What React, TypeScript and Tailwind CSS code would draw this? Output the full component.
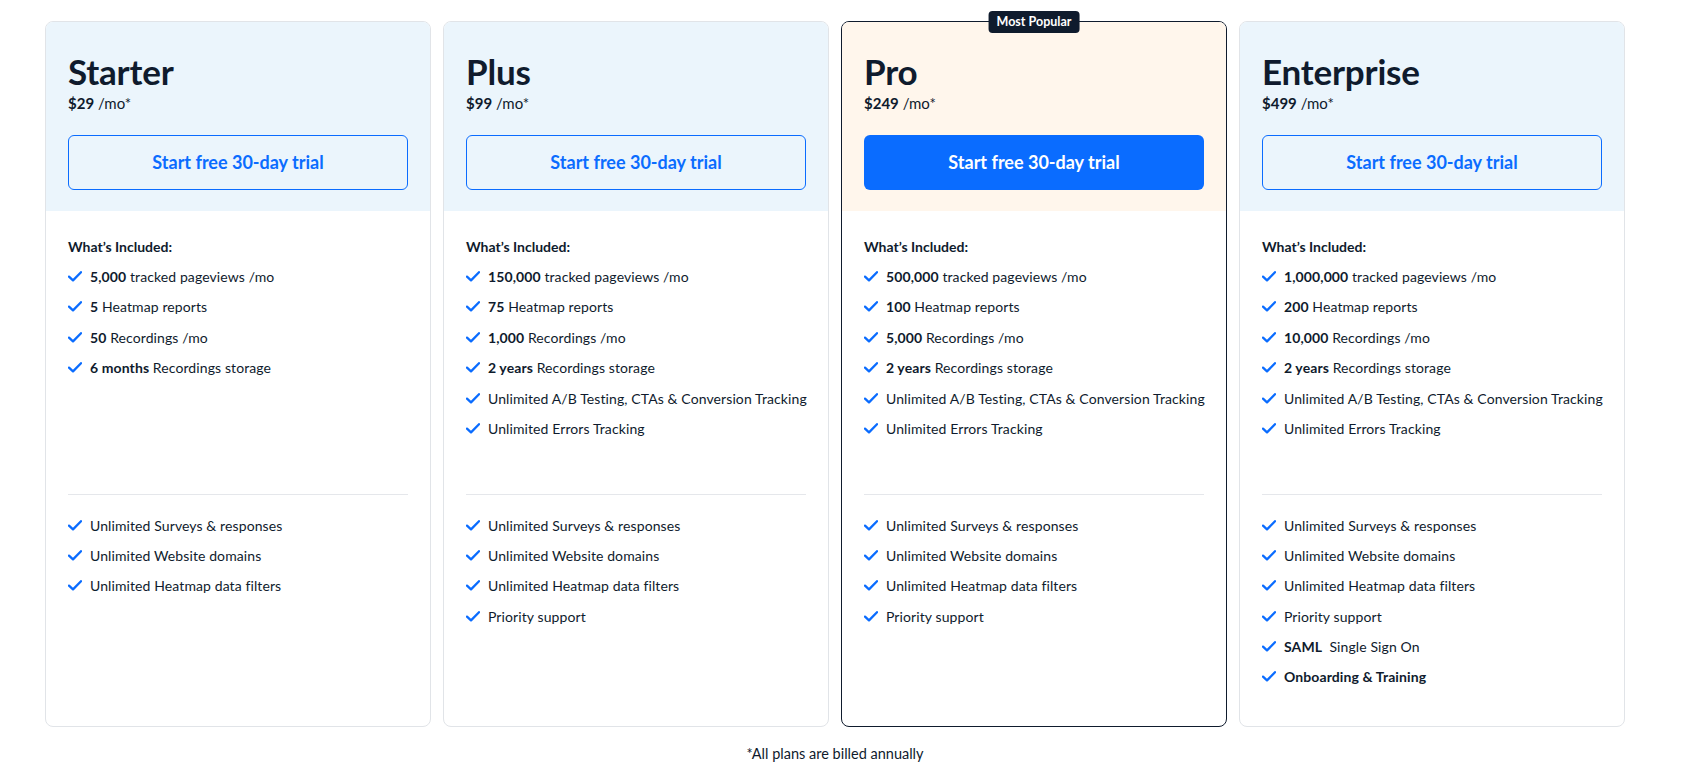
import React from "react";

type Feature = { bold?: string; text?: string; allBold?: string };

type Plan = {
  name: string;
  price: string;
  popular?: boolean;
  main: Feature[];
  extra: Feature[];
};

const common: Feature[] = [
  { text: "Unlimited Surveys & responses" },
  { text: "Unlimited Website domains" },
  { text: "Unlimited Heatmap data filters" },
];

const plans: Plan[] = [
  {
    name: "Starter",
    price: "$29",
    main: [
      { bold: "5,000", text: "tracked pageviews /mo" },
      { bold: "5", text: "Heatmap reports" },
      { bold: "50", text: "Recordings /mo" },
      { bold: "6 months", text: "Recordings storage" },
    ],
    extra: common,
  },
  {
    name: "Plus",
    price: "$99",
    main: [
      { bold: "150,000", text: "tracked pageviews /mo" },
      { bold: "75", text: "Heatmap reports" },
      { bold: "1,000", text: "Recordings /mo" },
      { bold: "2 years", text: "Recordings storage" },
      { text: "Unlimited A/B Testing, CTAs & Conversion Tracking" },
      { text: "Unlimited Errors Tracking" },
    ],
    extra: [...common, { text: "Priority support" }],
  },
  {
    name: "Pro",
    price: "$249",
    popular: true,
    main: [
      { bold: "500,000", text: "tracked pageviews /mo" },
      { bold: "100", text: "Heatmap reports" },
      { bold: "5,000", text: "Recordings /mo" },
      { bold: "2 years", text: "Recordings storage" },
      { text: "Unlimited A/B Testing, CTAs & Conversion Tracking" },
      { text: "Unlimited Errors Tracking" },
    ],
    extra: [...common, { text: "Priority support" }],
  },
  {
    name: "Enterprise",
    price: "$499",
    main: [
      { bold: "1,000,000", text: "tracked pageviews /mo" },
      { bold: "200", text: "Heatmap reports" },
      { bold: "10,000", text: "Recordings /mo" },
      { bold: "2 years", text: "Recordings storage" },
      { text: "Unlimited A/B Testing, CTAs & Conversion Tracking" },
      { text: "Unlimited Errors Tracking" },
    ],
    extra: [
      ...common,
      { text: "Priority support" },
      { bold: "SAML", text: "\u00a0Single Sign On" },
      { allBold: "Onboarding & Training" },
    ],
  },
];

function Check() {
  return (
    <svg width="14" height="11" viewBox="0 0 14 11" className="shrink-0">
      <path
        d="M1 5.6 L5 9.4 L13 1.2"
        fill="none"
        stroke="#0a6cff"
        strokeWidth="2.3"
        strokeLinecap="round"
        strokeLinejoin="round"
      />
    </svg>
  );
}

function FeatureRow({ f }: { f: Feature }) {
  return (
    <li className="flex items-center gap-[8px] h-[20px] text-[14px] tracking-[0.1px] whitespace-nowrap text-[#0f1b2d]">
      <Check />
      <span>
        {f.allBold && <b className="font-bold">{f.allBold}</b>}
        {f.bold && <b className="font-bold">{f.bold}</b>}
        {f.bold && " "}
        {f.text}
      </span>
    </li>
  );
}

function PlanCard({ plan }: { plan: Plan }) {
  return (
    <div
      className={`relative w-[386px] h-[706px] rounded-[8px] border ${
        plan.popular ? "border-[#0f1b2d]" : "border-[#e1e4e8]"
      } flex flex-col`}
    >
      {plan.popular && (
        <div className="absolute left-1/2 -translate-x-1/2 -top-[11px] h-[22px] px-[8px] rounded-[4px] bg-[#0f1b2d] text-white text-[12.5px] font-bold flex items-center">
          Most Popular
        </div>
      )}
      <div
        className={`h-[189px] rounded-t-[7px] px-[22px] pt-[28px] ${
          plan.popular ? "bg-[#fff6ec]" : "bg-[#ebf5fc]"
        }`}
      >
        <h2 className="text-[35px] leading-[42px] font-bold text-[#0f1b2d] tracking-[-0.2px]">
          {plan.name}
        </h2>
        <p className="mt-[1px] text-[15px] leading-[20px] text-[#0f1b2d]">
          <b className="font-bold">{plan.price}</b> /mo*
        </p>
        <button
          className={`mt-[22px] w-full h-[55px] rounded-[6px] text-[18px] font-bold ${
            plan.popular
              ? "bg-[#0a6cff] text-white"
              : "border border-[#0a6cff] text-[#0a6cff]"
          }`}
        >
          Start free 30-day trial
        </button>
      </div>
      <div className="px-[22px]">
        <div className="h-[283px] pt-[26px]">
          <p className="text-[14px] leading-[20px] font-bold text-[#0f1b2d]">
            What’s Included:
          </p>
          <ul className="mt-[9px] flex flex-col gap-[10.5px]">
            {plan.main.map((f, i) => (
              <FeatureRow key={i} f={f} />
            ))}
          </ul>
        </div>
        <div className="h-px bg-[#e5e7eb]" />
        <ul className="pt-[20px] flex flex-col gap-[10.4px]">
          {plan.extra.map((f, i) => (
            <FeatureRow key={i} f={f} />
          ))}
        </ul>
      </div>
    </div>
  );
}

export default function App() {
  return (
    <div
      className="bg-white min-h-[781px] pt-[21px] pl-[45px]"
      style={{ fontFamily: "Lato, 'Open Sans', sans-serif" }}
    >
      <div className="flex gap-[12px]">
        {plans.map((p) => (
          <PlanCard key={p.name} plan={p} />
        ))}
      </div>
      <p className="w-[1580px] text-center mt-[16px] text-[14.5px] text-[#0f1b2d]">
        *All plans are billed annually
      </p>
    </div>
  );
}
